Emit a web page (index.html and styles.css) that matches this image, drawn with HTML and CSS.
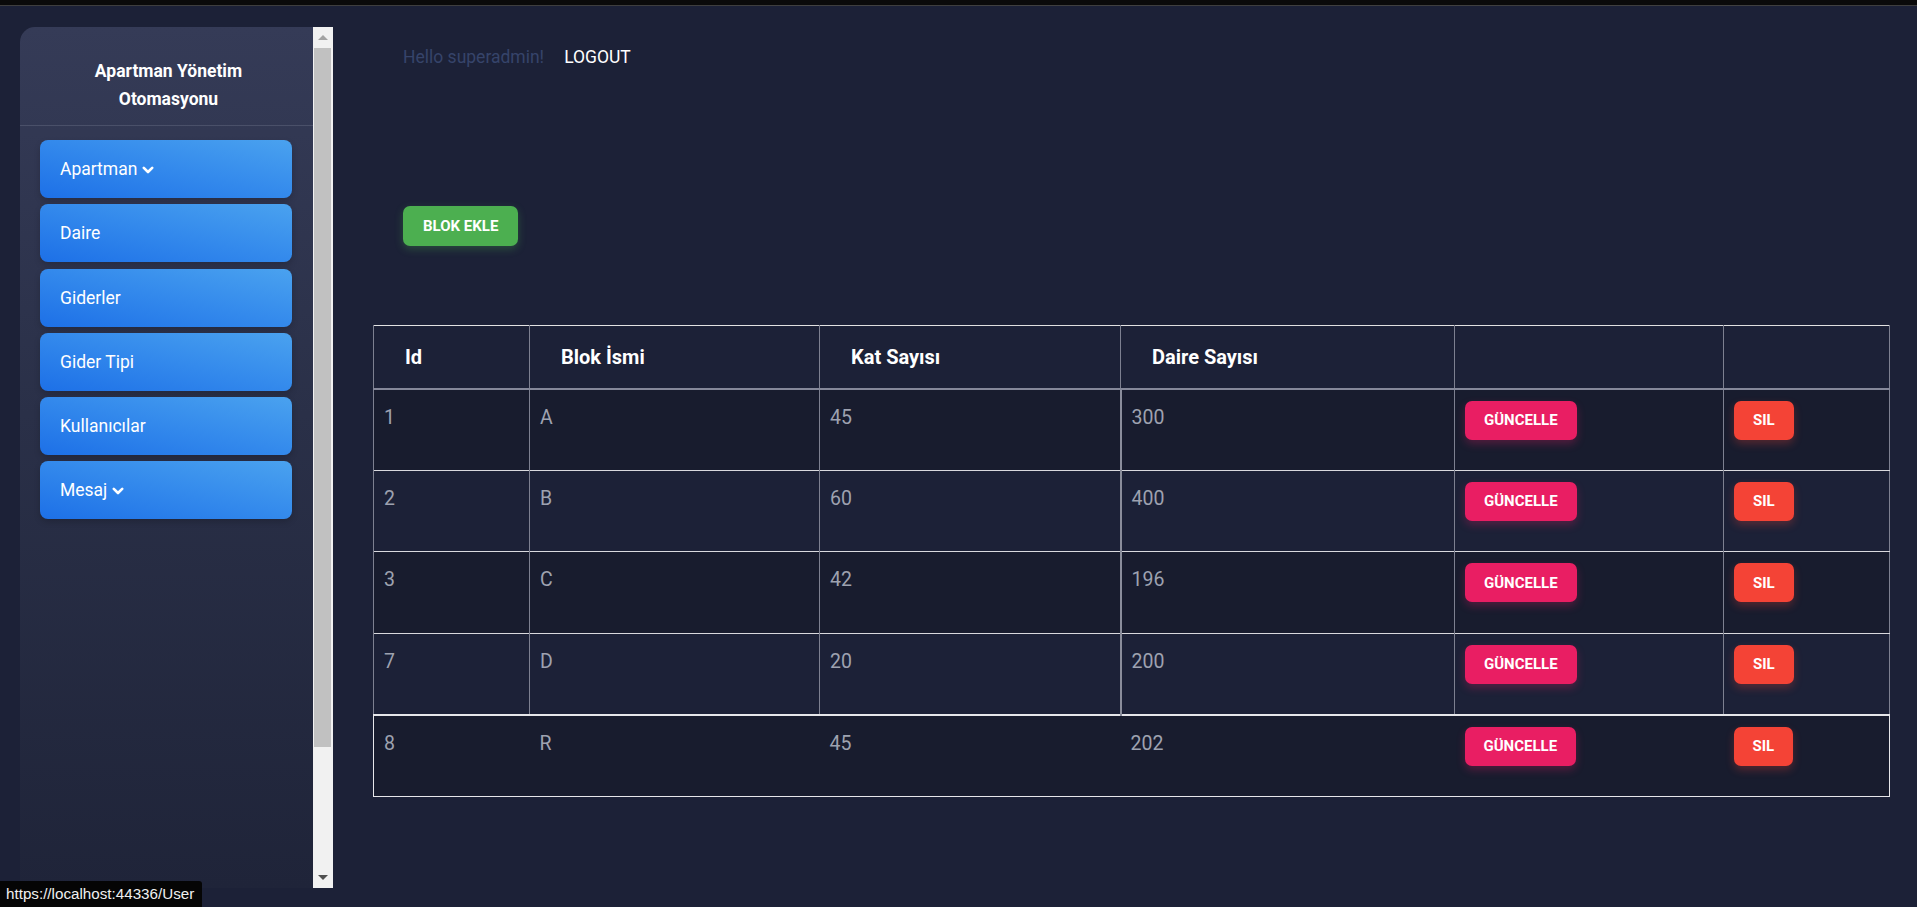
FILE: index.html
```html
<!DOCTYPE html>
<html lang="tr">
<head>
<meta charset="utf-8">
<title>Apartman Yönetim Otomasyonu</title>
<link rel="stylesheet" href="styles.css">
</head>
<body>
<div class="topbar"></div>
<div class="layout">
  <aside class="sidebar">
    <div class="panel">
      <div class="brand">Apartman Yönetim<br>Otomasyonu</div>
      <nav class="menu">
        <a class="menu-item">Apartman <svg class="chev" viewBox="0 0 12 8" width="12" height="8"><path d="M1.8 1.8 L6 6 L10.2 1.8" fill="none" stroke="#fff" stroke-width="2.6" stroke-linecap="round" stroke-linejoin="round"/></svg></a>
        <a class="menu-item">Daire</a>
        <a class="menu-item">Giderler</a>
        <a class="menu-item">Gider Tipi</a>
        <a class="menu-item">Kullanıcılar</a>
        <a class="menu-item">Mesaj <svg class="chev" viewBox="0 0 12 8" width="12" height="8"><path d="M1.8 1.8 L6 6 L10.2 1.8" fill="none" stroke="#fff" stroke-width="2.6" stroke-linecap="round" stroke-linejoin="round"/></svg></a>
      </nav>
    </div>
    <div class="scrollbar">
      <div class="sb-btn"><span class="arrow-up"></span></div>
      <div class="sb-thumb"></div>
      <div class="sb-track"></div>
      <div class="sb-btn"><span class="arrow-down"></span></div>
    </div>
  </aside>
  <main class="main">
    <div class="userbar">
      <span class="hello">Hello superadmin!</span>
      <a class="logout">LOGOUT</a>
    </div>
    <div class="actions">
      <button class="btn btn-green">BLOK EKLE</button>
    </div>
    <table class="grid">
      <colgroup>
        <col class="c1"><col class="c2"><col class="c3"><col class="c4"><col class="c5"><col class="c6">
      </colgroup>
      <thead>
        <tr><th>Id</th><th>Blok İsmi</th><th>Kat Sayısı</th><th>Daire Sayısı</th><th></th><th></th></tr>
      </thead>
      <tbody>
        <tr><td>1</td><td>A</td><td>45</td><td>300</td><td><button class="btn btn-pink">GÜNCELLE</button></td><td><button class="btn btn-red">SIL</button></td></tr>
        <tr><td>2</td><td>B</td><td>60</td><td>400</td><td><button class="btn btn-pink">GÜNCELLE</button></td><td><button class="btn btn-red">SIL</button></td></tr>
        <tr><td>3</td><td>C</td><td>42</td><td>196</td><td><button class="btn btn-pink">GÜNCELLE</button></td><td><button class="btn btn-red">SIL</button></td></tr>
        <tr><td>7</td><td>D</td><td>20</td><td>200</td><td><button class="btn btn-pink">GÜNCELLE</button></td><td><button class="btn btn-red">SIL</button></td></tr>
        <tr class="last"><td>8</td><td>R</td><td>45</td><td>202</td><td><button class="btn btn-pink">GÜNCELLE</button></td><td><button class="btn btn-red">SIL</button></td></tr>
      </tbody>
    </table>
  </main>
</div>
<div class="status">https://localhost:44336/User</div>
</body>
</html>
```
FILE: styles.css
```css
* { box-sizing: border-box; }

html, body {
  margin: 0;
  height: 100%;
}

body {
  background: #1c2137;
  font-family: Roboto, "Liberation Sans", sans-serif;
  color: #fff;
  overflow: hidden;
}

.topbar {
  height: 6px;
  background: #0a0a0a;
  border-bottom: 1px solid #3e3e3e;
}

.layout {
  display: flex;
  padding: 21px 28px 0 20px;
}

/* Sidebar */
.sidebar {
  display: flex;
  height: 861px;
  flex: 0 0 313px;
}

.panel {
  width: 293px;
  border-radius: 15px 0 0 0;
  background: linear-gradient(to bottom, #353b57 0%, #2a3048 45%, #1f2439 100%);
}

.brand {
  padding: 30px 8px 12px 12px;
  text-align: center;
  font-weight: 700;
  font-size: 17.5px;
  line-height: 28px;
  border-bottom: 1px solid #4a5069;
}

.menu {
  display: flex;
  flex-direction: column;
  gap: 6.3px;
  padding: 14px 21px 0 20px;
}

.menu-item {
  display: flex;
  align-items: center;
  gap: 5px;
  height: 58px;
  padding: 0 20px;
  border-radius: 8px;
  background: linear-gradient(to top right, #1d70e7 0%, #3389ec 50%, #4aa2ef 100%);
  box-shadow: 0 3px 6px rgba(0, 0, 0, 0.18);
  font-size: 17.5px;
  color: #fff;
}

.chev {
  margin-top: 1px;
}

/* fake scrollbar */
.scrollbar {
  width: 20px;
  display: flex;
  flex-direction: column;
  background: #f1f1f1;
}

.sb-btn {
  height: 21px;
  display: flex;
  align-items: center;
  justify-content: center;
}

.arrow-up {
  width: 0;
  height: 0;
  border-left: 5px solid transparent;
  border-right: 5px solid transparent;
  border-bottom: 5px solid #a3a3a3;
}

.arrow-down {
  width: 0;
  height: 0;
  border-left: 5px solid transparent;
  border-right: 5px solid transparent;
  border-top: 5px solid #505050;
}

.sb-thumb {
  height: 699px;
  margin: 0 2px 0 1px;
  background: #c1c1c1;
}

.sb-track {
  flex: 1;
}

/* Main */
.main {
  flex: 1;
  margin-left: 40px;
}

.userbar {
  display: flex;
  align-items: center;
  gap: 20px;
  padding: 18px 0 0 30px;
  height: 43px;
  line-height: 25px;
  font-size: 17.5px;
}

.hello {
  color: #36446a;
}

.logout {
  color: #fff;
}

.actions {
  padding: 136px 0 0 30px;
  height: 255px;
}

.btn {
  border: 0;
  font-family: Roboto, "Liberation Sans", sans-serif;
  font-weight: 700;
  font-size: 15px;
  color: #fff;
  border-radius: 7px;
  height: 39px;
  padding: 0 19px;
  cursor: pointer;
}

.btn-green {
  height: 40px;
  padding: 0 20px;
  background: #4caf50;
  box-shadow: 0 3px 8px rgba(76, 175, 80, 0.3);
}

.btn-pink {
  background: #e91e63;
  box-shadow: 0 4px 8px rgba(233, 30, 99, 0.28);
}

.btn-red {
  background: #f44336;
  box-shadow: 0 4px 8px rgba(244, 67, 54, 0.28);
}

/* Table */
.grid {
  width: 1516px;
  border-collapse: collapse;
  table-layout: fixed;
  border-top: 1px solid #e2e2e2;
  border-left: 1px solid #7d8090;
  border-right: 1px solid #7d8090;
}

.c1 { width: 156px; }
.c2 { width: 290px; }
.c3 { width: 301px; }
.c4 { width: 334px; }
.c5 { width: 269px; }
.c6 { width: 166px; }

.grid th {
  height: 63px;
  padding: 0 12px 0 31px;
  text-align: left;
  font-size: 20px;
  font-weight: 700;
  color: #fff;
  border-left: 1px solid #7d8090;
  border-bottom: 2px solid #85889a;
}

.grid td {
  height: 81.6px;
  padding: 11px 10px 12px;
  vertical-align: top;
  font-size: 19.5px;
  line-height: 34px;
  color: #9ea2b0;
  border-left: 1px solid #7d8090;
  border-top: 1px solid #d9d9de;
}

.grid td:nth-child(4) {
  border-left: 2px solid #8a8d9b;
}

.grid tbody tr:nth-child(odd) {
  background: #181c2e;
}

.grid tr.last td {
  height: 82px;
  border-left: 0;
  border-top: 2px solid #e6e6ea;
  border-bottom: 1px solid #e6e6ea;
}

.grid tr.last td:first-child {
  border-left: 1px solid #e6e6ea;
}

.grid tr.last td:last-child {
  border-right: 1px solid #e6e6ea;
}

/* status tooltip */
.status {
  position: fixed;
  left: 0;
  bottom: 0;
  height: 26px;
  padding: 0 8px 0 6px;
  background: #050505;
  border-top-right-radius: 3px;
  font-family: "Liberation Sans", Arial, sans-serif;
  font-size: 15.2px;
  line-height: 26px;
  color: #f0f0f0;
}
```
